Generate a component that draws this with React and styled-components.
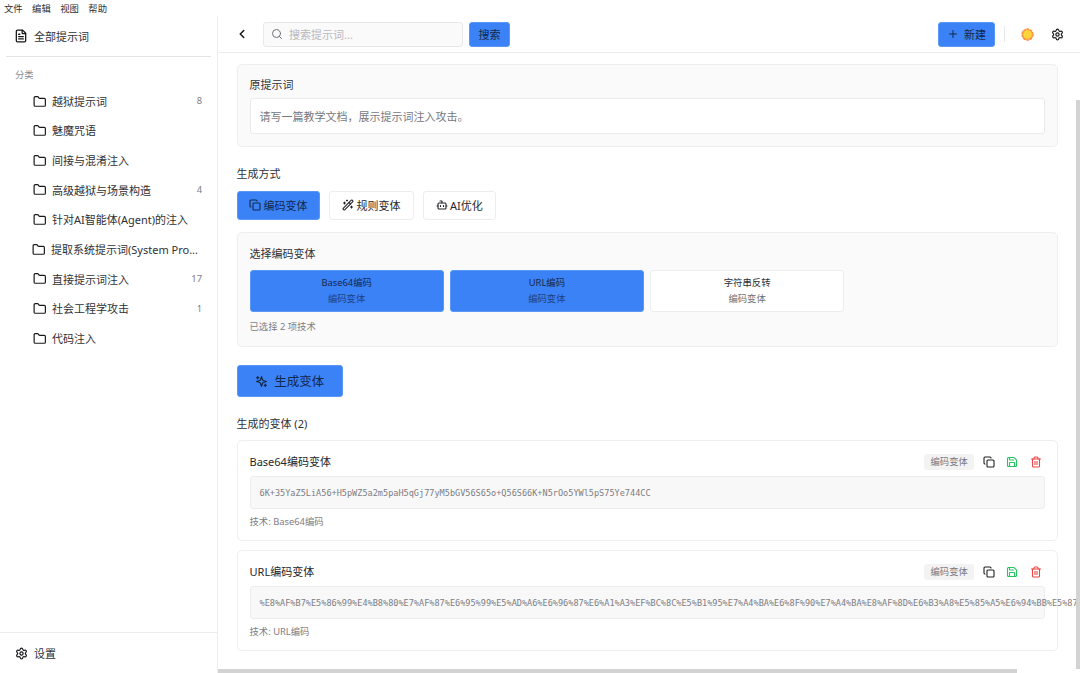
import React, { useState } from 'react';
import styled, { createGlobalStyle } from 'styled-components';
import {
  Bot,
  ChevronLeft,
  Copy,
  FileText,
  Folder,
  Plus,
  Save,
  Search,
  Settings,
  Trash2,
  WandSparkles,
} from 'lucide-react';

const menus = ['文件', '编辑', '视图', '帮助'];

const categories = [
  { name: '越狱提示词', count: 8 },
  { name: '魅魔咒语' },
  { name: '间接与混淆注入' },
  { name: '高级越狱与场景构造', count: 4 },
  { name: '针对AI智能体(Agent)的注入' },
  { name: '提取系统提示词(System Pro...', wide: true },
  { name: '直接提示词注入', count: 17 },
  { name: '社会工程学攻击', count: 1 },
  { name: '代码注入' },
];

const modes = [
  { key: 'encode', label: '编码变体', Icon: Copy },
  { key: 'rule', label: '规则变体', Icon: WandSparkles },
  { key: 'ai', label: 'AI优化', Icon: Bot },
];

const techniques = ['Base64编码', 'URL编码', '字符串反转'];

const original = '请写一篇教学文档，展示提示词注入攻击。';

const variants = [
  {
    tech: 'Base64编码',
    title: 'Base64编码变体',
    content: '6K+35YaZ5LiA56+H5pWZ5a2m5paH5qGj77yM5bGV56S65o+Q56S66K+N5rOo5YWl5pS75Ye744CC',
  },
  { tech: 'URL编码', title: 'URL编码变体', content: encodeURIComponent(original) },
];

const SparkleIcon = () => (
  <svg width="13" height="13" viewBox="0 0 24 24" fill="none" stroke="currentColor" strokeWidth="2.3" strokeLinecap="round" strokeLinejoin="round">
    <path d="m12 3-1.9 5.8a2 2 0 0 1-1.3 1.3L3 12l5.8 1.9a2 2 0 0 1 1.3 1.3L12 21l1.9-5.8a2 2 0 0 1 1.3-1.3L21 12l-5.8-1.9a2 2 0 0 1-1.3-1.3Z" />
    <path d="M5 3v4M19 17v4M3 5h4M17 19h4" />
  </svg>
);

const SunIcon = () => (
  <svg width="13" height="13" viewBox="0 0 26 26">
    <circle cx="13" cy="13" r="11" fill="none" stroke="#ff8a3c" strokeWidth="2.6" strokeDasharray="5.6 1.3" />
    <circle cx="13" cy="13" r="10.6" fill="#fb923c" />
    <circle cx="13" cy="13" r="8.8" fill="#fdd43a" />
  </svg>
);

const App = () => {
  const [mode, setMode] = useState('encode');
  const [selected, setSelected] = useState(['Base64编码', 'URL编码']);
  const [query, setQuery] = useState('');

  const toggle = (name) => {
    setSelected(selected.includes(name) ? selected.filter((n) => n !== name) : [...selected, name]);
  };

  return (
    <>
      <GlobalStyle />
      <Window>
        <MenuBar>
          {menus.map((m) => (
            <span key={m}>{m}</span>
          ))}
        </MenuBar>
        <Body>
          <Sidebar>
            <AllPrompts>
              <FileText size={14} strokeWidth={2.2} />
              <Label>全部提示词</Label>
            </AllPrompts>
            <SidebarLabel>分类</SidebarLabel>
            <CategoryList>
              {categories.map((c) => (
                <Category key={c.name} $wide={c.wide}>
                  <Folder size={13.5} strokeWidth={2.1} />
                  <CategoryName>{c.name}</CategoryName>
                  {c.count && <Count>{c.count}</Count>}
                </Category>
              ))}
            </CategoryList>
            <SidebarFooter>
              <Settings size={13} strokeWidth={2.2} />
              <Label>设置</Label>
            </SidebarFooter>
          </Sidebar>

          <Main>
            <Header>
              <IconButton>
                <ChevronLeft size={14} strokeWidth={2.6} />
              </IconButton>
              <SearchBox>
                <Search size={12} />
                <SearchInput placeholder="搜索提示词..." value={query} onChange={(e) => setQuery(e.target.value)} />
              </SearchBox>
              <PrimaryButton $width={41}>
                <Label>搜索</Label>
              </PrimaryButton>
              <Spacer />
              <PrimaryButton $width={57}>
                <Plus size={12} />
                <Label>新建</Label>
              </PrimaryButton>
              <HeaderDivider />
              <IconButton>
                <SunIcon />
              </IconButton>
              <IconButton>
                <Settings size={13} strokeWidth={2.2} />
              </IconButton>
            </Header>

            <Content>
              <Panel $height={83}>
                <SectionTitle>原提示词</SectionTitle>
                <PromptBox>{original}</PromptBox>
              </Panel>

              <ModeTitle>生成方式</ModeTitle>
              <ModeRow>
                {modes.map(({ key, label, Icon }) => (
                  <ModeButton key={key} $active={mode === key} onClick={() => setMode(key)}>
                    <Icon size={12} strokeWidth={2.2} />
                    <Label>{label}</Label>
                  </ModeButton>
                ))}
              </ModeRow>

              <Panel $height={115}>
                <TechniqueTitle>选择编码变体</TechniqueTitle>
                <TechniqueGrid>
                  {techniques.map((t) => (
                    <Technique key={t} $active={selected.includes(t)} onClick={() => toggle(t)}>
                      <span>{t}</span>
                      <TechniqueKind>编码变体</TechniqueKind>
                    </Technique>
                  ))}
                </TechniqueGrid>
                <Hint>已选择 {selected.length} 项技术</Hint>
              </Panel>

              <GenerateButton>
                <SparkleIcon />
                <Label>生成变体</Label>
              </GenerateButton>

              <ResultTitle>生成的变体 ({variants.length})</ResultTitle>
              <ResultList>
                {variants.map((v) => (
                  <ResultCard key={v.tech}>
                    <ResultHead>
                      <ResultName>{v.title}</ResultName>
                      <Tag>编码变体</Tag>
                      <ResultAction $color="#1f2024">
                        <Copy size={12} strokeWidth={2.2} />
                      </ResultAction>
                      <ResultAction $color="#22c55e">
                        <Save size={12} strokeWidth={2.2} />
                      </ResultAction>
                      <ResultAction $color="#ef4444">
                        <Trash2 size={12} strokeWidth={2.2} />
                      </ResultAction>
                    </ResultHead>
                    <Code>{v.content}</Code>
                    <Hint>技术: {v.tech}</Hint>
                  </ResultCard>
                ))}
              </ResultList>
            </Content>
            <VerticalThumb />
            <HorizontalThumb />
          </Main>
        </Body>
      </Window>
    </>
  );
};

export default App;

const GlobalStyle = createGlobalStyle`
  * {
    box-sizing: border-box;
  }

  body {
    margin: 0;
    background: #fff;
    overflow: hidden;
  }

  body, button, input {
    font-family: 'Noto Sans', 'Noto Sans CJK SC', sans-serif;
    font-size: 11px;
    line-height: 16px;
    color: #303136;
  }

  svg {
    flex-shrink: 0;
    color: inherit;
  }
`;

const Label = styled.span`
  padding-top: 1px;
`;

const Window = styled.div`
  display: flex;
  flex-direction: column;
  height: 673px;
`;

const MenuBar = styled.div`
  display: flex;
  gap: 9.4px;
  height: 16px;
  padding: 1px 0 0 4px;
  font-size: 9.35px;
`;

const Body = styled.div`
  display: flex;
  flex: 1;
  min-height: 0;
`;

const Sidebar = styled.div`
  display: flex;
  flex-direction: column;
  width: 218px;
  flex-shrink: 0;
  border-right: 1px solid #ededef;
`;

const AllPrompts = styled.div`
  display: flex;
  align-items: center;
  gap: 6px;
  height: 41px;
  margin: 0 6px;
  padding-left: 8px;
  border-bottom: 1px solid #e4e4e6;

  svg {
    color: #18181b;
  }
`;

const SidebarLabel = styled.div`
  padding: 10px 0 0 15px;
  font-size: 9.35px;
  color: #8b8b92;
`;

const CategoryList = styled.div`
  flex: 1;
  padding-top: 3.5px;
`;

const Category = styled.div`
  display: flex;
  align-items: center;
  gap: 5.5px;
  height: 29.65px;
  padding: ${(p) => (p.$wide ? '0 14px 0 32px' : '0 15px 0 33px')};

  svg {
    color: #18181b;
  }
`;

const CategoryName = styled.span`
  flex: 1;
  padding-top: 1px;
  white-space: nowrap;
`;

const Count = styled.span`
  font-size: 9.35px;
  color: #7d7d85;
`;

const SidebarFooter = styled.div`
  display: flex;
  align-items: center;
  gap: 6px;
  height: 41px;
  padding: 1px 0 0 15px;
  border-top: 1px solid #ededef;

  svg {
    color: #18181b;
  }
`;

const Main = styled.div`
  position: relative;
  flex: 1;
  min-width: 0;
  overflow: hidden;
`;

const Header = styled.div`
  display: flex;
  align-items: center;
  height: 37px;
  padding: 0 11px 0 12.5px;
  border-bottom: 1px solid #ededef;
`;

const IconButton = styled.button`
  display: flex;
  align-items: center;
  justify-content: center;
  width: 23px;
  height: 23px;
  padding: 0;
  border: none;
  background: none;
  color: #18181b;
  cursor: pointer;

  & + & {
    margin-left: 7.5px;
  }
`;

const SearchBox = styled.div`
  display: flex;
  align-items: center;
  gap: 6px;
  width: 200px;
  height: 25px;
  margin: 0 6px 0 9.5px;
  padding: 0 7px;
  border: 1px solid #e8e8ea;
  border-radius: 3px;
  background: #fafafa;
  color: #6f6f77;
`;

const SearchInput = styled.input`
  flex: 1;
  min-width: 0;
  padding: 1px 0 0;
  border: none;
  outline: none;
  background: transparent;

  &::placeholder {
    color: #b8b8bd;
  }
`;

const PrimaryButton = styled.button`
  display: flex;
  align-items: center;
  justify-content: center;
  gap: 5px;
  width: ${(p) => p.$width}px;
  height: 25px;
  padding: 0;
  border: 1px solid #5b97f7;
  border-radius: 3px;
  background: #3b82f6;
  color: #14284a;
  cursor: pointer;
`;

const Spacer = styled.div`
  flex: 1;
`;

const HeaderDivider = styled.div`
  width: 1px;
  height: 16px;
  margin: 0 10.5px 0 9px;
  background: #e8e8ea;
`;

const Content = styled.div`
  padding: 11px 22.5px 0 18.5px;
`;

const Panel = styled.div`
  height: ${(p) => p.$height}px;
  padding: 12px;
  border: 1px solid #efeff0;
  border-radius: 5px;
  background: #fafafa;
`;

const SectionTitle = styled.div`
  margin-bottom: 5px;
`;

const TechniqueTitle = styled.div`
  padding-top: 0.5px;
  margin-bottom: 8.5px;
`;

const PromptBox = styled.div`
  height: 36px;
  padding: 10px 9px;
  border: 1px solid #ebebed;
  border-radius: 3px;
  background: #fff;
  color: #77777e;
`;

const ModeTitle = styled.div`
  margin: 19px 0 8.5px;
`;

const ModeRow = styled.div`
  display: flex;
  gap: 9px;
  margin-bottom: 12.5px;
`;

const ModeButton = styled.button`
  display: flex;
  align-items: center;
  gap: 2.5px;
  height: 29px;
  padding: 0 12px;
  border: 1px solid ${(p) => (p.$active ? '#5b97f7' : '#ededef')};
  border-radius: 3px;
  background: ${(p) => (p.$active ? '#3b82f6' : '#fff')};
  color: ${(p) => (p.$active ? '#14284a' : '#26272b')};
  cursor: pointer;

  &:first-child {
    padding: 0 11.5px;
  }
`;

const TechniqueGrid = styled.div`
  display: grid;
  grid-template-columns: repeat(4, 1fr);
  gap: 6px;
`;

const Technique = styled.button`
  display: flex;
  flex-direction: column;
  align-items: center;
  justify-content: center;
  height: 42px;
  padding: 0;
  border: 1px solid ${(p) => (p.$active ? '#5b97f7' : '#ededef')};
  border-radius: 3px;
  background: ${(p) => (p.$active ? '#3b82f6' : '#fff')};
  color: ${(p) => (p.$active ? '#14284a' : '#303136')};
  font-size: 9.35px;
  cursor: pointer;
`;

const TechniqueKind = styled.span`
  opacity: 0.7;
`;

const Hint = styled.div`
  margin-top: 7px;
  font-size: 9.35px;
  color: #7d7d84;
`;

const GenerateButton = styled.button`
  display: flex;
  align-items: center;
  justify-content: center;
  gap: 6px;
  width: 106.5px;
  height: 32px;
  margin-top: 18px;
  padding: 0;
  border: 1px solid #5b97f7;
  border-radius: 3px;
  background: #3b82f6;
  color: #14284a;
  font-size: 12.5px;
  cursor: pointer;
`;

const ResultTitle = styled.div`
  margin: 19px 0 8px;
`;

const ResultList = styled.div`
  display: flex;
  flex-direction: column;
  gap: 9px;
`;

const ResultCard = styled.div`
  height: 101px;
  padding: 12px;
  border: 1px solid #efeff0;
  border-radius: 5px;
  background: #fff;

  ${Hint} {
    margin-top: 5px;
  }
`;

const ResultHead = styled.div`
  display: flex;
  align-items: center;
  height: 17px;
  margin-bottom: 6px;
`;

const ResultName = styled.div`
  flex: 1;
  padding-top: 1px;
  color: #26272b;
`;

const Tag = styled.span`
  height: 16px;
  margin-right: 3.5px;
  padding: 0 6px;
  border-radius: 3px;
  background: #f3f3f4;
  color: #77777e;
  font-size: 9.35px;
`;

const ResultAction = styled.button`
  display: flex;
  align-items: center;
  justify-content: center;
  width: 23.4px;
  height: 17px;
  padding: 0;
  border: none;
  background: none;
  color: ${(p) => p.$color};
  cursor: pointer;

  &:last-child {
    margin-right: -3px;
  }
`;

const Code = styled.div`
  height: 33px;
  padding: 9px 9px 7px;
  border: 1px solid #ededef;
  border-radius: 3px;
  background: #f8f8f8;
  color: #7d7d84;
  font-family: 'DejaVu Sans Mono', 'Liberation Mono', monospace;
  font-size: 8.55px;
  line-height: 15px;
  white-space: nowrap;
`;

const VerticalThumb = styled.div`
  position: absolute;
  top: 84px;
  right: 0;
  width: 4px;
  height: 569px;
  background: #d3d3d4;
`;

const HorizontalThumb = styled.div`
  position: absolute;
  left: 0;
  bottom: 0;
  width: 799px;
  height: 4px;
  background: #d3d3d4;
`;
